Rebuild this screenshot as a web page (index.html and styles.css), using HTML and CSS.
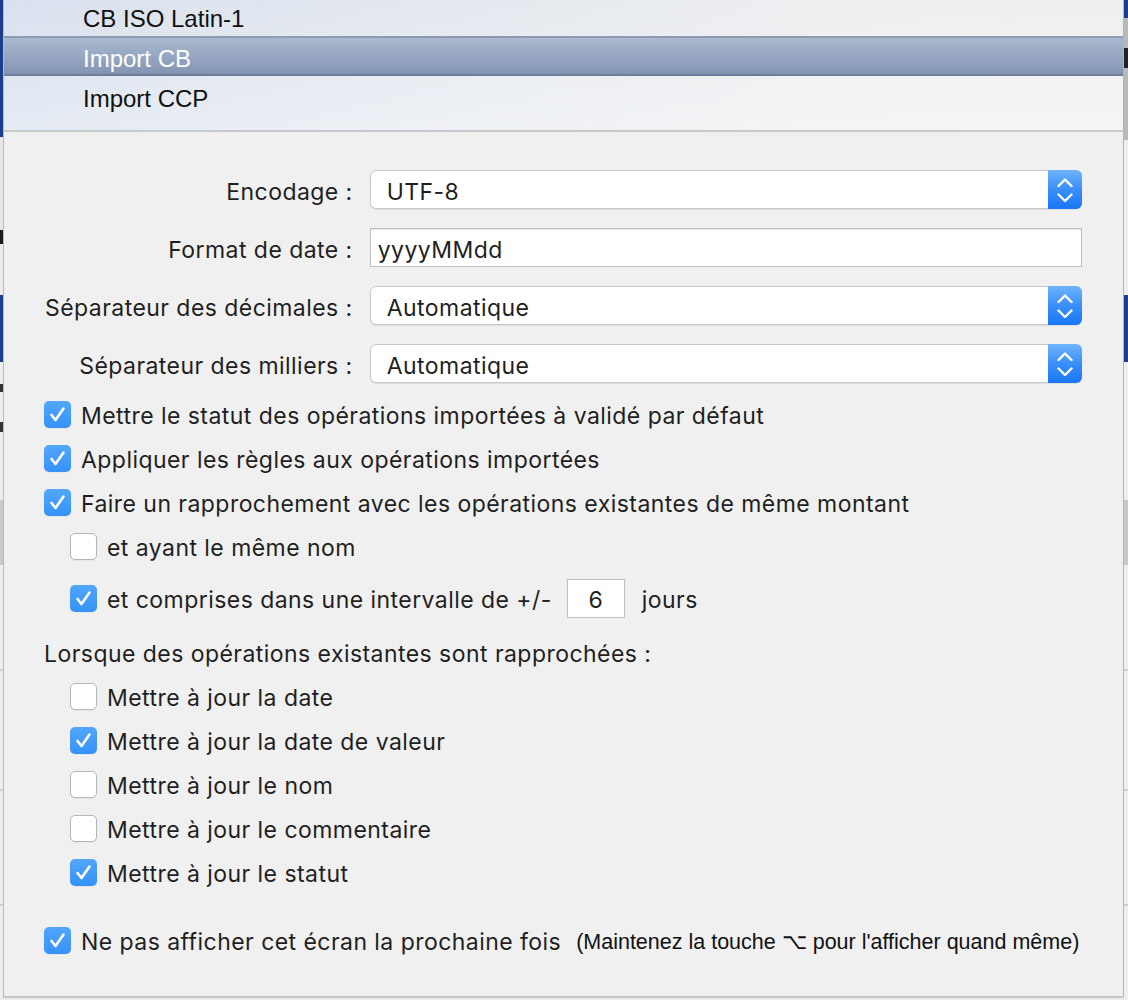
FILE: index.html
```html
<!DOCTYPE html>
<html lang="fr">
<head>
<meta charset="utf-8">
<title>Import</title>
<link rel="stylesheet" href="styles.css">
</head>
<body>
<div class="screen">
  <div class="bg-strip bg-left"></div>
  <div class="sheet">
    <ul class="menu">
      <li class="menu-item first">CB ISO Latin-1</li>
      <li class="menu-item selected">Import CB</li>
      <li class="menu-item">Import CCP</li>
    </ul>
    <div class="form">
      <div class="fields">
        <span class="field-label">Encodage :</span>
        <div class="popup"><span class="popup-value">UTF-8</span><span class="stepper"><svg width="16" height="30" viewBox="0 0 16 30"><path d="M1.5 11 L8 4.5 L14.5 11" /><path d="M1.5 19.5 L8 26 L14.5 19.5" /></svg></span></div>
        <span class="field-label">Format de date :</span>
        <div class="textfield"><span class="tf-value">yyyyMMdd</span></div>
        <span class="field-label">Séparateur des décimales :</span>
        <div class="popup"><span class="popup-value">Automatique</span><span class="stepper"><svg width="16" height="30" viewBox="0 0 16 30"><path d="M1.5 11 L8 4.5 L14.5 11" /><path d="M1.5 19.5 L8 26 L14.5 19.5" /></svg></span></div>
        <span class="field-label">Séparateur des milliers :</span>
        <div class="popup"><span class="popup-value">Automatique</span><span class="stepper"><svg width="16" height="30" viewBox="0 0 16 30"><path d="M1.5 11 L8 4.5 L14.5 11" /><path d="M1.5 19.5 L8 26 L14.5 19.5" /></svg></span></div>
      </div>

      <div class="check-row first-check"><span class="cb checked"><svg viewBox="0 0 27 27"><path d="M7.5 14 L11.5 19 L19.5 7.5" /></svg></span><span class="lbl">Mettre le statut des opérations importées à validé par défaut</span></div>
      <div class="check-row"><span class="cb checked"><svg viewBox="0 0 27 27"><path d="M7.5 14 L11.5 19 L19.5 7.5" /></svg></span><span class="lbl">Appliquer les règles aux opérations importées</span></div>
      <div class="check-row"><span class="cb checked"><svg viewBox="0 0 27 27"><path d="M7.5 14 L11.5 19 L19.5 7.5" /></svg></span><span class="lbl">Faire un rapprochement avec les opérations existantes de même montant</span></div>
      <div class="check-row indent"><span class="cb"></span><span class="lbl">et ayant le même nom</span></div>
      <div class="check-row indent interval"><span class="cb checked"><svg viewBox="0 0 27 27"><path d="M7.5 14 L11.5 19 L19.5 7.5" /></svg></span><span class="lbl">et comprises dans une intervalle de +/-</span><span class="numfield"><span class="tf-value">6</span></span><span class="lbl unit">jours</span></div>

      <div class="section-title"><span class="lbl">Lorsque des opérations existantes sont rapprochées :</span></div>
      <div class="check-row indent"><span class="cb"></span><span class="lbl">Mettre à jour la date</span></div>
      <div class="check-row indent"><span class="cb checked"><svg viewBox="0 0 27 27"><path d="M7.5 14 L11.5 19 L19.5 7.5" /></svg></span><span class="lbl">Mettre à jour la date de valeur</span></div>
      <div class="check-row indent"><span class="cb"></span><span class="lbl">Mettre à jour le nom</span></div>
      <div class="check-row indent"><span class="cb"></span><span class="lbl">Mettre à jour le commentaire</span></div>
      <div class="check-row indent"><span class="cb checked"><svg viewBox="0 0 27 27"><path d="M7.5 14 L11.5 19 L19.5 7.5" /></svg></span><span class="lbl">Mettre à jour le statut</span></div>

      <div class="check-row last-check"><span class="cb checked"><svg viewBox="0 0 27 27"><path d="M7.5 14 L11.5 19 L19.5 7.5" /></svg></span><span class="lbl">Ne pas afficher cet écran la prochaine fois</span><span class="lbl hint">(Maintenez la touche ⌥ pour l'afficher quand même)</span></div>
    </div>
  </div>
  <div class="bg-strip bg-right"></div>
</div>
</body>
</html>
```

FILE: styles.css
```css
* { box-sizing: border-box; }
html, body { margin: 0; padding: 0; }
body {
  width: 1128px;
  height: 1000px;
  overflow: hidden;
  background: #ececec;
  font-family: Inter, "Noto Sans", sans-serif;
  color: #1f1f1f;
}
.screen {
  display: flex;
  height: 1000px;
}
.bg-strip { flex: none; height: 1000px; }
.bg-left {
  width: 3px;
  background: linear-gradient(to bottom,
    #1d3f8b 0 137px, #e6e6e6 137px 230px, #1a1a1a 230px 244px, #ececec 244px 295px,
    #1d3f8b 295px 362px, #eeeeee 362px 384px, #333 384px 392px, #eeeeee 392px 422px,
    #333 422px 432px, #eeeeee 432px 500px, #c9c9c9 500px 565px, #eeeeee 565px 669px,
    #cfcfcf 669px 671px, #eeeeee 671px 789px, #cfcfcf 789px 791px, #eeeeee 791px 904px,
    #cfcfcf 904px 906px, #eeeeee 906px);
}
.bg-right {
  width: 4px;
  background: linear-gradient(to bottom,
    #1d3f8b 0 18px, #b9b9b9 18px 48px, #222 48px 68px, #b9b9b9 68px 140px,
    #eeeeee 140px 295px, #1d3f8b 295px 362px, #eeeeee 362px 500px, #c9c9c9 500px 565px,
    #eeeeee 565px 669px, #cfcfcf 669px 671px, #eeeeee 671px 789px, #cfcfcf 789px 791px,
    #eeeeee 791px 904px, #cfcfcf 904px 906px, #eeeeee 906px);
}
.sheet {
  flex: 1;
  height: 998px;
  background: #f0f0f0;
  border-left: 1px solid #b9b9b9;
  border-right: 1px solid #b3b3b3;
  border-bottom: 2px solid #c6c6c6;
  display: flex;
  flex-direction: column;
}

/* Menu */
.menu {
  list-style: none;
  margin: 0;
  padding: 0;
  height: 132px;
  border-bottom: 2px solid #c9c9c9;
  background:
    linear-gradient(to bottom, rgba(255,255,255,0) 0, rgba(255,255,255,0.35) 100%),
    linear-gradient(to right, #d8e1ee 0, #e3e8ef 35%, #eceef0 70%, #eeefef 100%);
  font-family: "Liberation Sans", Arial, sans-serif;
  font-size: 24px;
  color: #111;
}
.menu-item {
  height: 40px;
  display: flex;
  align-items: center;
  padding: 6px 0 0 79px;
}
.menu-item.first { margin-top: -4px; }
.menu-item.selected {
  color: #ffffff;
  border-top: 2px solid #8d9bb2;
  border-bottom: 2px solid #6e7e9a;
  background: linear-gradient(to bottom, #abb9d0 0, #97a7c2 50%, #8394b3 100%);
}

/* Form */
.form {
  padding: 38px 41px 0 41px;
  font-size: 23px;
  letter-spacing: 0.45px;
}
.fields {
  display: grid;
  grid-template-columns: auto 1fr;
  column-gap: 17px;
  row-gap: 19px;
  align-items: center;
}
.field-label {
  text-align: right;
  white-space: nowrap;
  padding-top: 4px;
}
.popup {
  height: 39px;
  background: #ffffff;
  border: 1px solid #c8c8c8;
  border-radius: 6px;
  box-shadow: 0 1px 1px rgba(0,0,0,0.08);
  display: flex;
  align-items: center;
  padding-left: 16px;
}
.popup-value { flex: 1; padding-top: 4px; }
.stepper {
  align-self: stretch;
  width: 34px;
  margin: -1px -1px -1px 0;
  border-radius: 0 6px 6px 0;
  background: linear-gradient(to bottom, #6fb3fb 0, #3a8ff9 50%, #1876f7 100%);
  display: flex;
  align-items: center;
  justify-content: center;
}
.stepper svg path {
  fill: none;
  stroke: #ffffff;
  stroke-width: 2.4;
  stroke-linecap: round;
  stroke-linejoin: round;
}
.textfield {
  height: 39px;
  background: #ffffff;
  border: 1px solid #bfbfbf;
  box-shadow: inset 0 1px 0 #e6e6e6;
  display: flex;
  align-items: center;
  padding-left: 7px;
}
.tf-value { padding-top: 4px; }

.check-row {
  height: 44px;
  display: flex;
  align-items: center;
  gap: 10px;
  white-space: nowrap;
  margin-left: -1px;
}
.check-row .lbl { padding-top: 3px; }
.check-row.first-check { margin-top: 9px; }
.check-row.indent { padding-left: 26px; }
.check-row.interval { margin-top: 8px; }
.check-row.last-check { margin-top: 24px; }
.cb {
  flex: none;
  width: 27px;
  height: 27px;
  border-radius: 5px;
  background: #ffffff;
  border: 1px solid #b5b5b5;
  box-shadow: 0 1px 0 rgba(0,0,0,0.04);
  display: flex;
}
.cb.checked {
  border: none;
  background: linear-gradient(to bottom, #53a6fa 0, #3592f9 100%);
}
.cb svg { width: 27px; height: 27px; }
.cb svg path {
  fill: none;
  stroke: #ffffff;
  stroke-width: 2.6;
  stroke-linecap: round;
  stroke-linejoin: round;
}
.numfield {
  width: 58px;
  height: 39px;
  margin-left: 5px;
  background: #ffffff;
  border: 1px solid #bfbfbf;
  display: flex;
  align-items: center;
  justify-content: center;
}
.unit { margin-left: 7px; }
.section-title {
  height: 44px;
  margin-top: 10px;
  margin-left: -1px;
  display: flex;
  align-items: center;
}
.section-title .lbl { padding-top: 3px; }
.hint {
  margin-left: 5px;
  font-family: "Liberation Sans", Arial, sans-serif;
  font-size: 21.5px;
  letter-spacing: 0;
  color: #111;
}
```
